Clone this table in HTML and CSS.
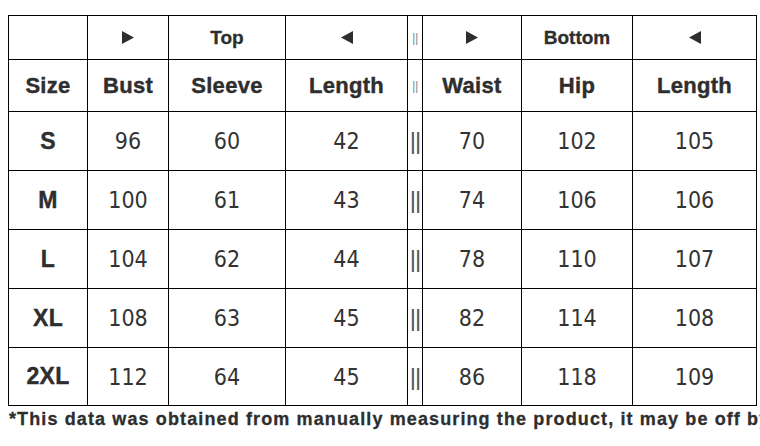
FILE: index.html
```html
<!DOCTYPE html>
<html>
<head>
<meta charset="utf-8">
<link rel="stylesheet" href="styles.css">
</head>
<body>
<div class="page">
  <table class="size-chart">
    <colgroup>
      <col class="c-size"><col class="c-bust"><col class="c-sleeve"><col class="c-tlen">
      <col class="c-sep"><col class="c-waist"><col class="c-hip"><col class="c-blen">
    </colgroup>
    <tr class="row-group">
      <td></td>
      <td><svg class="arrow" viewBox="0 0 12 13" width="12" height="13"><polygon points="0,0 12,6.5 0,13"/></svg></td>
      <td class="group">Top</td>
      <td><svg class="arrow" viewBox="0 0 12 13" width="12" height="13"><polygon points="12,0 0,6.5 12,13"/></svg></td>
      <td class="sep sep-light">||</td>
      <td><svg class="arrow" viewBox="0 0 12 13" width="12" height="13"><polygon points="0,0 12,6.5 0,13"/></svg></td>
      <td class="group">Bottom</td>
      <td><svg class="arrow" viewBox="0 0 12 13" width="12" height="13"><polygon points="12,0 0,6.5 12,13"/></svg></td>
    </tr>
    <tr class="row-head">
      <th>Size</th><th>Bust</th><th>Sleeve</th><th>Length</th>
      <td class="sep sep-light">||</td>
      <th>Waist</th><th>Hip</th><th>Length</th>
    </tr>
    <tr class="row-data">
      <th>S</th><td>96</td><td>60</td><td>42</td><td class="sep">||</td><td>70</td><td>102</td><td>105</td>
    </tr>
    <tr class="row-data">
      <th>M</th><td>100</td><td>61</td><td>43</td><td class="sep">||</td><td>74</td><td>106</td><td>106</td>
    </tr>
    <tr class="row-data">
      <th>L</th><td>104</td><td>62</td><td>44</td><td class="sep">||</td><td>78</td><td>110</td><td>107</td>
    </tr>
    <tr class="row-data">
      <th>XL</th><td>108</td><td>63</td><td>45</td><td class="sep">||</td><td>82</td><td>114</td><td>108</td>
    </tr>
    <tr class="row-data last">
      <th>2XL</th><td>112</td><td>64</td><td>45</td><td class="sep">||</td><td>86</td><td>118</td><td>109</td>
    </tr>
  </table>
  <p class="note">*This data was obtained from manually measuring the product, it may be off by 1-3 CM.</p>
</div>
</body>
</html>
```

FILE: styles.css
```css
html, body {
  margin: 0;
  padding: 0;
  background: #ffffff;
}
body {
  width: 760px;
  height: 446px;
  overflow: hidden;
  color: #2e2e2e;
  font-family: "Liberation Sans", Arial, sans-serif;
}
.page {
  padding: 15px 0 0 8px;
}
.size-chart {
  border-collapse: collapse;
  table-layout: fixed;
  width: 748px;
}
.size-chart td,
.size-chart th {
  border: 1px solid #000;
  padding: 0;
  text-align: center;
  vertical-align: middle;
}
.c-size { width: 79px; }
.c-bust { width: 81px; }
.c-sleeve { width: 117px; }
.c-tlen { width: 122px; }
.c-sep { width: 15px; }
.c-waist { width: 99px; }
.c-hip { width: 111px; }
.c-blen { width: 124px; }

.row-group { height: 44px; }
.row-head { height: 52px; }
.row-data { height: 59px; }
.row-data.last { height: 58px; }

.group {
  font-weight: bold;
  font-size: 19px;
  -webkit-text-stroke: 0.3px #2e2e2e;
}
.arrow {
  display: block;
  margin: 0 auto;
  fill: #2e2e2e;
}
.row-head th {
  font-weight: bold;
  font-size: 22px;
  letter-spacing: 0.3px;
  -webkit-text-stroke: 0.4px #2e2e2e;
}
.row-data th {
  font-weight: bold;
  font-size: 23px;
  letter-spacing: 0.3px;
  -webkit-text-stroke: 0.4px #2e2e2e;
}
.row-data td {
  font-family: "DejaVu Sans Condensed", "DejaVu Sans", sans-serif;
  font-stretch: condensed;
  font-size: 23px;
  color: #333;
}
.row-data td.sep,
.sep {
  font-family: "Liberation Sans", Arial, sans-serif;
  font-size: 24px;
  letter-spacing: -1px;
  color: #555;
}
.sep-light {
  font-size: 13px;
  color: #8a9490;
  letter-spacing: -0.5px;
}
.note {
  margin: 3px 0 0 1px;
  white-space: nowrap;
  font-weight: bold;
  font-size: 18px;
  letter-spacing: 1.12px;
  -webkit-text-stroke: 0.3px #2e2e2e;
  color: #2e2e2e;
}
```
